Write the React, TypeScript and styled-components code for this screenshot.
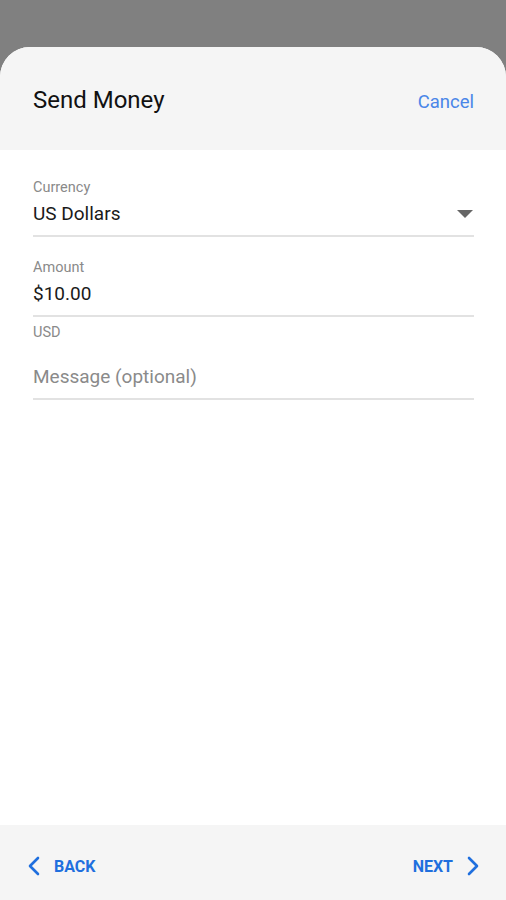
import styled, { createGlobalStyle } from "styled-components";

const GlobalStyle = createGlobalStyle`
  html, body {
    margin: 0;
    padding: 0;
    background: #808080;
    font-family: Roboto, "Liberation Sans", Arial, sans-serif;
  }
`;

const Screen = styled.div`
  width: 506px;
  height: 900px;
  display: flex;
  flex-direction: column;
  background: #808080;
`;

const Sheet = styled.div`
  margin-top: 47px;
  flex: 1;
  display: flex;
  flex-direction: column;
  background: #ffffff;
  border-radius: 30px 30px 0 0;
  overflow: hidden;
`;

const Header = styled.div`
  height: 103px;
  box-sizing: border-box;
  padding: 3px 32px 0 33px;
  background: #f5f5f5;
  display: flex;
  align-items: center;
  justify-content: space-between;
`;

const Title = styled.h1`
  margin: 0;
  font-size: 24px;
  font-weight: 400;
  color: #111;
`;

const LinkButton = styled.button`
  border: none;
  background: none;
  padding: 0;
  font-family: inherit;
  font-size: 18.5px;
  color: #4a86e8;
  margin-top: 4px;
`;

const Form = styled.div`
  flex: 1;
  display: flex;
  flex-direction: column;
  padding: 29px 32px 0 33px;
`;

const Field = styled.div<{ $gap?: number }>`
  display: flex;
  flex-direction: column;
  margin-bottom: ${(p) => p.$gap ?? 0}px;
`;

const Label = styled.div`
  font-size: 14.5px;
  color: #8a8a8a;
  line-height: 17px;
  margin-bottom: 7px;
`;

const Helper = styled.div`
  font-size: 14.5px;
  color: #8a8a8a;
  line-height: 17px;
  margin-top: 7px;
`;

const InputRow = styled.div`
  display: flex;
  align-items: center;
  justify-content: space-between;
  border-bottom: 2px solid #e2e2e2;
  padding-bottom: 10px;
`;

const Value = styled.div<{ $placeholder?: boolean }>`
  font-size: 19px;
  line-height: 22px;
  color: ${(p) => (p.$placeholder ? "#8a8a8a" : "#1a1a1a")};
`;

const Caret = styled.div`
  width: 0;
  height: 0;
  border-left: 8px solid transparent;
  border-right: 8px solid transparent;
  border-top: 8px solid #666;
  margin-right: 1px;
`;

const Footer = styled.div`
  height: 75px;
  box-sizing: border-box;
  padding: 7px 26px 0 27px;
  background: #f5f5f5;
  display: flex;
  align-items: center;
  justify-content: space-between;
`;

const NavButton = styled.button`
  display: flex;
  align-items: center;
  gap: 13px;
  border: none;
  background: none;
  padding: 0;
  font-family: inherit;
  font-size: 16px;
  font-weight: 700;
  color: #1f6fde;
`;

const Chevron = ({ dir }: { dir: "left" | "right" }) => (
  <svg width="14" height="20" viewBox="0 0 14 20" fill="none">
    <path
      d={dir === "left" ? "M11 2 L3 10 L11 18" : "M3 2 L11 10 L3 18"}
      stroke="#1f6fde"
      strokeWidth="2.6"
      strokeLinecap="round"
      strokeLinejoin="round"
    />
  </svg>
);

export default function App() {
  return (
    <Screen>
      <GlobalStyle />
      <Sheet>
        <Header>
          <Title>Send Money</Title>
          <LinkButton>Cancel</LinkButton>
        </Header>
        <Form>
          <Field $gap={22}>
            <Label>Currency</Label>
            <InputRow>
              <Value>US Dollars</Value>
              <Caret />
            </InputRow>
          </Field>
          <Field $gap={25}>
            <Label>Amount</Label>
            <InputRow>
              <Value>$10.00</Value>
            </InputRow>
            <Helper>USD</Helper>
          </Field>
          <Field>
            <InputRow>
              <Value $placeholder>Message (optional)</Value>
            </InputRow>
          </Field>
        </Form>
        <Footer>
          <NavButton>
            <Chevron dir="left" />
            BACK
          </NavButton>
          <NavButton>
            NEXT
            <Chevron dir="right" />
          </NavButton>
        </Footer>
      </Sheet>
    </Screen>
  );
}
